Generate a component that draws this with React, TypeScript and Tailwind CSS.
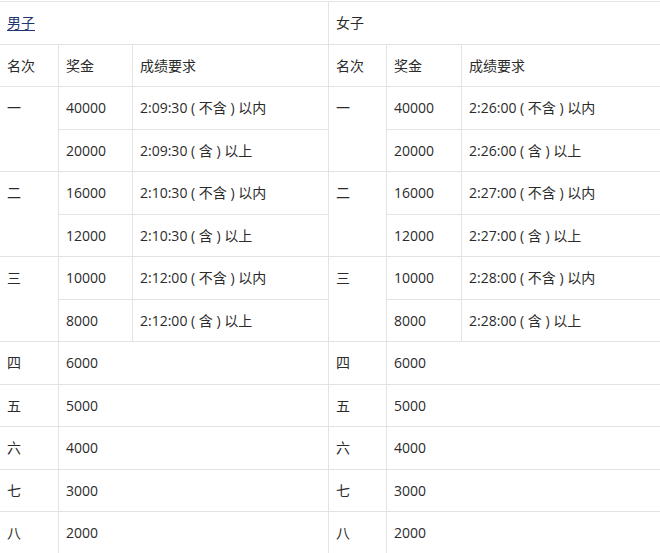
const men = [
  { rank: '一', rows: [['40000', '2:09:30 ( 不含 ) 以内'], ['20000', '2:09:30 ( 含 ) 以上']] },
  { rank: '二', rows: [['16000', '2:10:30 ( 不含 ) 以内'], ['12000', '2:10:30 ( 含 ) 以上']] },
  { rank: '三', rows: [['10000', '2:12:00 ( 不含 ) 以内'], ['8000', '2:12:00 ( 含 ) 以上']] },
]

const women = [
  { rank: '一', rows: [['40000', '2:26:00 ( 不含 ) 以内'], ['20000', '2:26:00 ( 含 ) 以上']] },
  { rank: '二', rows: [['16000', '2:27:00 ( 不含 ) 以内'], ['12000', '2:27:00 ( 含 ) 以上']] },
  { rank: '三', rows: [['10000', '2:28:00 ( 不含 ) 以内'], ['8000', '2:28:00 ( 含 ) 以上']] },
]

const rest = [
  ['四', '6000'],
  ['五', '5000'],
  ['六', '4000'],
  ['七', '3000'],
  ['八', '2000'],
]

const td = 'border border-[#e3e3e3] px-[7px] pt-[10px] pb-[9px] align-top leading-[21px]'

export default function App() {
  return (
    <div
      className="w-[660px] h-[553px] overflow-hidden bg-white text-[14px] text-[#2b2b2b]"
      style={{ fontFamily: '"Open Sans", "Noto Sans CJK SC", sans-serif' }}
    >
      <table className="table-fixed border-collapse -ml-px mt-px w-[661px]">
        <colgroup>
          <col className="w-[59px]" />
          <col className="w-[74px]" />
          <col className="w-[196px]" />
          <col className="w-[58px]" />
          <col className="w-[75px]" />
          <col className="w-[199px]" />
        </colgroup>
        <tbody>
          <tr className="h-[42.5px]">
            <td colSpan={3} className={td}>
              <a href="#" className="text-[#1f3670] underline underline-offset-2">男子</a>
            </td>
            <td colSpan={3} className={td}>女子</td>
          </tr>
          <tr className="h-[42.5px]">
            <td className={td}>名次</td>
            <td className={td}>奖金</td>
            <td className={td}>成绩要求</td>
            <td className={td}>名次</td>
            <td className={td}>奖金</td>
            <td className={td}>成绩要求</td>
          </tr>
          {men.map((m, i) =>
            m.rows.map((r, j) => (
              <tr key={`${i}-${j}`} className="h-[42.5px]">
                {j === 0 && (
                  <td rowSpan={2} className={td}>{m.rank}</td>
                )}
                <td className={td}>{r[0]}</td>
                <td className={td}>{r[1]}</td>
                {j === 0 && (
                  <td rowSpan={2} className={td}>{women[i].rank}</td>
                )}
                <td className={td}>{women[i].rows[j][0]}</td>
                <td className={td}>{women[i].rows[j][1]}</td>
              </tr>
            ))
          )}
          {rest.map(([rank, prize]) => (
            <tr key={rank} className="h-[42.5px]">
              <td className={td}>{rank}</td>
              <td colSpan={2} className={td}>{prize}</td>
              <td className={td}>{rank}</td>
              <td colSpan={2} className={td}>{prize}</td>
            </tr>
          ))}
        </tbody>
      </table>
    </div>
  )
}
